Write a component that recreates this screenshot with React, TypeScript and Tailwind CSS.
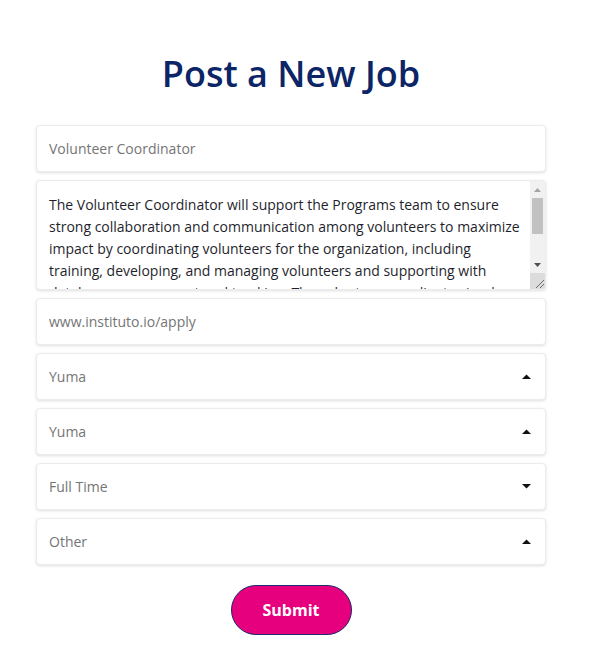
const description =
  "The Volunteer Coordinator will support the Programs team to ensure strong collaboration and communication among volunteers to maximize impact by coordinating volunteers for the organization, including training, developing, and managing volunteers and supporting with database management and tracking. The volunteer coordinator is a key member of the Programs team and reports to the Programs Director.";

const box =
  "w-full rounded border border-[#ececec] bg-white shadow-[0_1px_3px_rgba(0,0,0,0.13)]";

const Caret = ({ up }: { up: boolean }) => (
  <svg width="9" height="5" viewBox="0 0 9 5" className="mr-[14px]">
    {up ? <path d="M0 5 L4.5 0.5 L9 5 Z" fill="#111" /> : <path d="M0 0 L4.5 4.5 L9 0 Z" fill="#111" />}
  </svg>
);

const SelectBox = ({ label, up }: { label: string; up: boolean }) => (
  <div className={`${box} flex h-[47px] items-center justify-between pl-[12px]`}>
    <span className="text-[14px] text-[#757575]">{label}</span>
    <Caret up={up} />
  </div>
);

// fake classic scrollbar so the textarea looks like the screenshot
const Scrollbar = () => (
  <div className="flex w-[15px] flex-col bg-[#f1f1f1]">
    <div className="flex h-[17px] items-center justify-center">
      <svg width="7" height="4" viewBox="0 0 7 4">
        <path d="M0 4 L3.5 0 L7 4 Z" fill="#a3a3a3" />
      </svg>
    </div>
    <div className="mx-[2px] h-[36px] bg-[#c1c1c1]" />
    <div className="flex-1" />
    <div className="flex h-[17px] items-center justify-center">
      <svg width="7" height="4" viewBox="0 0 7 4">
        <path d="M0 0 L3.5 4 L7 0 Z" fill="#505050" />
      </svg>
    </div>
    <div className="flex h-[16px] items-end justify-end bg-[#dcdcdc]">
      <svg width="10" height="10" viewBox="0 0 10 10">
        <path d="M9 1 L1 9 M9 5 L5 9" stroke="#6a6a6a" strokeWidth="1" />
      </svg>
    </div>
  </div>
);

export default function App() {
  return (
    <div className="min-h-[668px] bg-white font-['Open_Sans',sans-serif]">
      <div className="ml-[36px] flex w-[510px] flex-col items-center pt-[48px]">
        <h1 className="text-[36px] font-semibold leading-[52px] text-[#0b2566]">
          Post a New Job
        </h1>

        <form className="mt-[25px] flex w-full flex-col gap-[8px]">
          <input
            className={`${box} h-[47px] px-[12px] text-[14px] text-[#757575] outline-none`}
            defaultValue="Volunteer Coordinator"
          />
          <div className={`${box} flex h-[110px] overflow-hidden`}>
            <textarea
              className="flex-1 resize-none overflow-hidden pl-[12px] pr-[4px] pt-[13px] text-[14px] leading-[22px] text-[#1f1f2e] outline-none"
              defaultValue={description}
            />
            <Scrollbar />
          </div>
          <input
            className={`${box} h-[47px] px-[12px] text-[14px] text-[#757575] outline-none`}
            defaultValue="www.instituto.io/apply"
          />
          <SelectBox label="Yuma" up />
          <SelectBox label="Yuma" up />
          <SelectBox label="Full Time" up={false} />
          <SelectBox label="Other" up />

          <div className="mt-[12px] flex justify-center">
            <button
              type="button"
              className="h-[50px] w-[121px] rounded-full border border-[#1a2a6c] bg-[#e6007e] text-[16px] font-bold text-white"
            >
              Submit
            </button>
          </div>
        </form>
      </div>
    </div>
  );
}
